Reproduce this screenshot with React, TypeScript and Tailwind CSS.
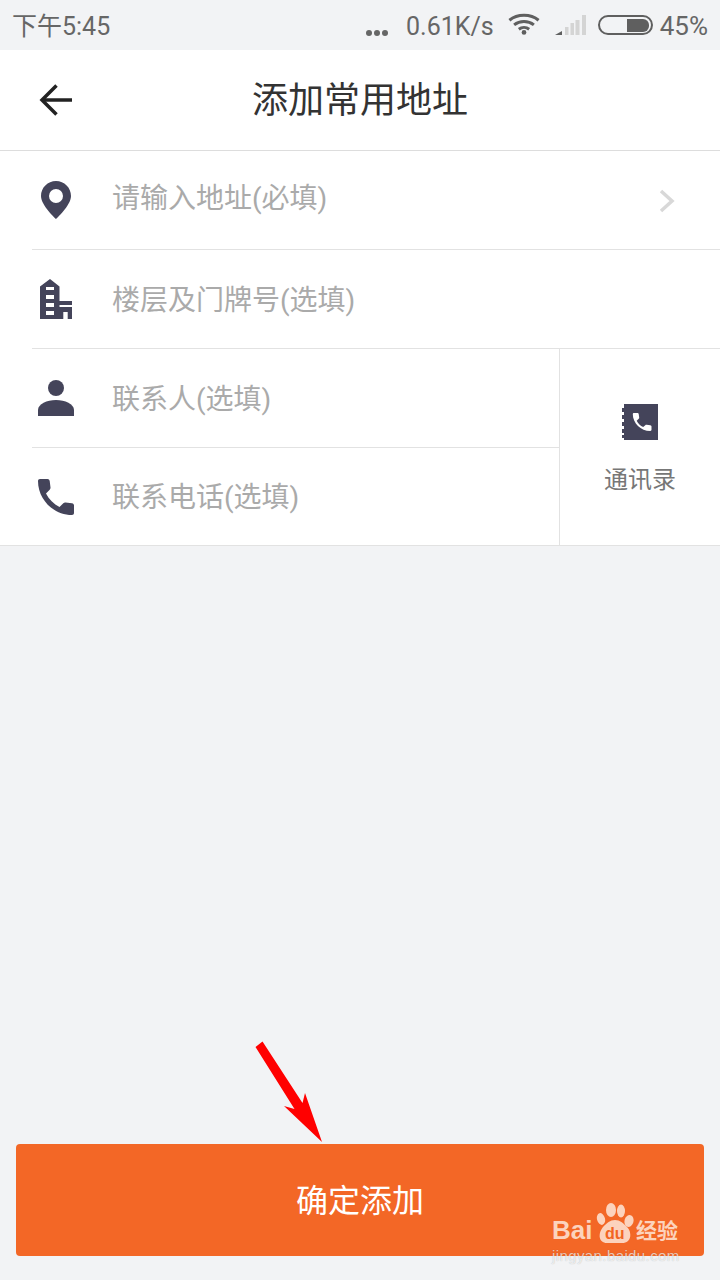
const CJK = "font-['Roboto','Noto_Sans_CJK_SC',sans-serif]";

function BackArrow() {
  return (
    <svg width="36" height="36" viewBox="0 0 36 36" fill="none" stroke="#222222" strokeWidth="3.5">
      <path d="M35 18H5" />
      <path d="M19.5 3.5 5 18l14.500 14.500" />
    </svg>
  );
}

function Wifi() {
  return (
    <svg width="32" height="22" viewBox="0 0 34 23" fill="none" stroke="#5f5f5f" strokeWidth="3.2">
      <path d="M1.500 7.500C10 .5 24 .5 32.500 7.500" />
      <path d="M6.500 12.500c6-4.800 15-4.800 21 0" />
      <path d="M11.500 17c3.200-2.400 7.800-2.400 11 0" />
      <circle cx="17" cy="20.500" r="2.500" fill="#5f5f5f" stroke="none" />
    </svg>
  );
}

function Signal() {
  return (
    <svg width="32" height="20" viewBox="0 0 32 20">
      <path d="M0 20 7 16V20Z" fill="#5f5f5f" />
      <rect x="10" y="12" width="3.500" height="8" fill="#d4d4d4" />
      <rect x="15.500" y="8" width="3.500" height="12" fill="#d4d4d4" />
      <rect x="20.500" y="5" width="4" height="15" fill="#d4d4d4" />
      <rect x="27" y="0" width="4" height="20" fill="#d4d4d4" />
    </svg>
  );
}

function Battery() {
  return (
    <div className="w-[55px] h-[20px] border-2 border-[#5f5f5f] rounded-[10px] flex justify-end items-center pr-[2px]">
      <div className="w-[22px] h-[13px] bg-[#5f5f5f] rounded-r-[6px]" />
    </div>
  );
}

function PinIcon() {
  return (
    <svg width="30" height="38" viewBox="0 0 30 38">
      <path
        fillRule="evenodd"
        d="M15 0C6.700 0 0 6.700 0 15c0 9.500 15 23 15 23s15-13.500 15-23C30 6.700 23.300 0 15 0Zm0 8a7 7 0 1 1 0 14 7 7 0 0 1 0-14Z"
        fill="#44445a"
      />
    </svg>
  );
}

function BuildingIcon() {
  return (
    <svg width="32" height="40" viewBox="0 0 32 40">
      <path
        fillRule="evenodd"
        d="M0 40V7.500L10 0l9.500 7.500V22H32v4H19.500v2H32v12h-4.300v-7h-4.400v7ZM6 8v3h8V8Zm0 8v4h8v-4Zm0 8v4h8v-4Zm0 8v4h8v-4Z"
        fill="#44445a"
      />
    </svg>
  );
}

function PersonIcon() {
  return (
    <svg width="36" height="36" viewBox="0 0 36 36" fill="#44445a">
      <circle cx="18" cy="8" r="8" />
      <path d="M0 36v-6c0-6 9-10 18-10s18 4 18 10v6Z" />
    </svg>
  );
}

function PhoneIcon() {
  return (
    <svg width="36" height="36" viewBox="0 0 36 36">
      <path
        d="M2 0h7.500c1.200 0 2 .8 2.200 2l.8 6.500c.1.900-.2 1.500-.8 2.200L8 14.500c3 5.800 7.700 10.500 13.500 13.500l3.800-3.700c.7-.6 1.300-.9 2.200-.8l6.500.8c1.200.2 2 1 2 2.200V34c0 1.200-.8 2-2 2C15.500 36 0 20.500 0 2 0 .8.800 0 2 0Z"
        fill="#44445a"
      />
    </svg>
  );
}

function ContactsIcon() {
  return (
    <svg width="36" height="36" viewBox="0 0 36 36">
      <path d="M2 0h34v36H2Z" fill="#44445a" />
      <path d="M0 4h4v4H0Zm0 7h4v4H0Zm0 7h4v4H0Zm0 7h4v4H0Zm0 6h4v3H0Z" fill="#44445a" />
      <path
        d="M12 9h3.500c.7 0 1.100.5 1.200 1.100l.5 3.400c.1.500-.1.900-.5 1.300l-2 1.900c1.400 2.700 3.700 5 6.500 6.400l2.100-1.900c.4-.4.800-.5 1.300-.4l3.700.5c.7.100 1.200.5 1.200 1.200v3.300c0 .7-.5 1.200-1.200 1.200C18.800 27 10.800 19 10.800 10.200c0-.7.500-1.200 1.200-1.200Z"
        fill="#ffffff"
      />
    </svg>
  );
}

function Arrow() {
  return (
    <svg className="absolute left-[250px] top-[1036px]" width="80" height="110" viewBox="250 1036 80 110">
      <path d="M255.500 1047 262.500 1041.500 302.500 1103 305 1093 322 1142 284 1106 294.500 1109Z" fill="#ff0000" />
    </svg>
  );
}

function Watermark() {
  return (
    <div className="absolute left-[552px] top-[1200px] w-[132px] h-[70px] font-['Liberation_Sans','Noto_Sans_CJK_SC',sans-serif]">
      <span className="absolute left-0 top-[13px] text-[26px] leading-[34px] font-bold text-[#fcd3bd]">Bai</span>
      <svg className="absolute left-[44px] top-[2px]" width="40" height="42" viewBox="0 0 40 42" fill="#fcd3bd">
        <ellipse cx="5" cy="17" rx="4" ry="6" transform="rotate(-15 5 17)" />
        <ellipse cx="15" cy="8" rx="5" ry="7" />
        <ellipse cx="25" cy="9" rx="4" ry="6.500" />
        <ellipse cx="33" cy="19" rx="4.500" ry="6" transform="rotate(15 33 19)" />
        <path d="M19 18c5 0 8 3 12 7 5 5 5 16-5 16H11C2 41 2 31 7 25c4-4 7-7 12-7Z" />
      </svg>
      <span className="absolute left-[53px] top-[24px] text-[16px] leading-[20px] font-bold text-[#f26522]">du</span>
      <span className="absolute left-[84px] top-[17px] text-[21px] leading-[28px] font-bold text-[#fcd3bd] whitespace-nowrap">经验</span>
      <span className="absolute left-0 top-[47px] text-[15px] leading-[18px] tracking-[0.4px] text-white/70 whitespace-nowrap [text-shadow:0_0_1px_rgba(0,0,0,0.25)]">jingyan.baidu.com</span>
    </div>
  );
}

export default function App() {
  return (
    <div className={`relative w-[720px] h-[1280px] overflow-hidden bg-[#f2f3f5] flex flex-col ${CJK}`}>
      <div className="h-[50px] flex items-center pl-[12px] pr-[12px] text-[25px] text-[#666666]">
        <span className="mt-[4px]">下午5:45</span>
        <div className="ml-auto flex items-center">
          <div className="flex gap-[2px] mt-[16px]">
            <span className="w-[6px] h-[6px] rounded-full bg-[#666666]" />
            <span className="w-[6px] h-[6px] rounded-full bg-[#666666]" />
            <span className="w-[6px] h-[6px] rounded-full bg-[#666666]" />
          </div>
          <span className="ml-[18px] mt-[4px]">0.61K/s</span>
          <div className="ml-[14px] -mt-[3px]"><Wifi /></div>
          <div className="ml-[15px]"><Signal /></div>
          <div className="ml-[11px]"><Battery /></div>
          <span className="ml-[7px] mt-[3px] text-[26px]">45%</span>
        </div>
      </div>

      <div className="relative h-[101px] bg-white border-b border-[#dddddd] flex items-center justify-center">
        <div className="absolute left-[37px] top-[32px]"><BackArrow /></div>
        <h1 className="text-[36px] leading-[44px] mt-[2px] text-[#333333]">添加常用地址</h1>
      </div>

      <div className="bg-white border-b border-[#e2e2e2]">
        <div className="ml-[32px] border-b border-[#e2e2e2] h-[99px] flex items-center">
          <div className="w-[48px] flex justify-center shrink-0"><PinIcon /></div>
          <span className="ml-[32px] -mt-[2px] flex-1 text-[28px] leading-[36px] text-[#aaaaaa]">请输入地址(必填)</span>
          <svg className="mr-[45px] mt-[2px]" width="16" height="24" viewBox="0 0 16 24" fill="none" stroke="#d8d8d8" strokeWidth="3.5">
            <path d="M2 2l11 10L2 22" />
          </svg>
        </div>
        <div className="ml-[32px] border-b border-[#e2e2e2] h-[99px] flex items-center">
          <div className="w-[48px] flex justify-center shrink-0"><BuildingIcon /></div>
          <span className="ml-[32px] mt-[4px] flex-1 text-[28px] leading-[36px] text-[#aaaaaa]">楼层及门牌号(选填)</span>
        </div>
        <div className="flex h-[196px]">
          <div className="w-[560px] border-r border-[#e2e2e2] pl-[32px] flex flex-col">
            <div className="h-[99px] border-b border-[#e2e2e2] flex items-center">
              <div className="w-[48px] flex justify-center shrink-0"><PersonIcon /></div>
              <span className="ml-[32px] mt-[4px] text-[28px] leading-[36px] text-[#aaaaaa]">联系人(选填)</span>
            </div>
            <div className="h-[97px] flex items-center">
              <div className="w-[48px] flex justify-center shrink-0"><PhoneIcon /></div>
              <span className="ml-[32px] mt-[2px] text-[28px] leading-[36px] text-[#aaaaaa]">联系电话(选填)</span>
            </div>
          </div>
          <div className="flex-1 flex flex-col items-center pt-[55px]">
            <ContactsIcon />
            <span className="mt-[24px] text-[24px] leading-[32px] text-[#777777]">通讯录</span>
          </div>
        </div>
      </div>

      <div className="flex-1" />

      <div className="px-[16px] pb-[24px]">
        <button className="w-full h-[112px] rounded-[4px] bg-[#f36726] text-white text-[32px] leading-[40px] pt-[2px]">确定添加</button>
      </div>

      <Arrow />
      <Watermark />
    </div>
  );
}
